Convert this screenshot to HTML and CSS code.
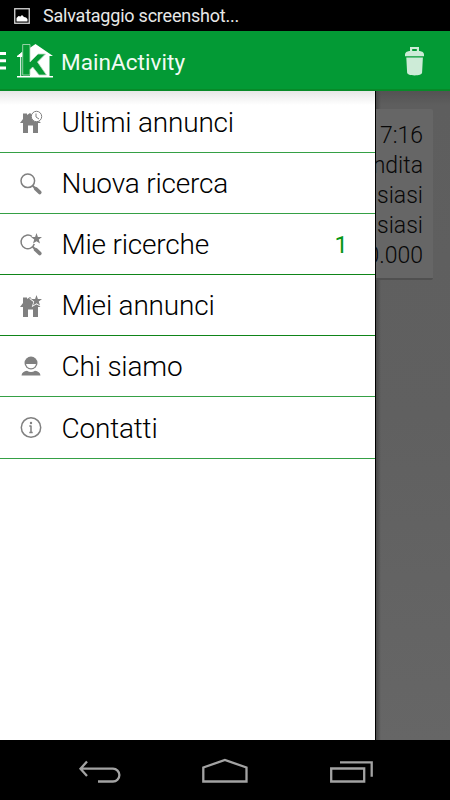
FILE: index.html
```html
<!DOCTYPE html>
<html lang="it">
<head>
<meta charset="utf-8">
<title>MainActivity</title>
<link rel="stylesheet" href="styles.css">
</head>
<body>
<div class="status">
  <svg class="status-icon" width="16" height="16" viewBox="0 0 16 16"><rect x=".75" y=".75" width="14.5" height="14.5" fill="none" stroke="#d8d8d8" stroke-width="1.3"/><path d="M2.500 13.500V10l2-2 2 .5 1.500-1.500 2 2 2 .5 1.500 1.500v2.500z" fill="#fff"/></svg>
  <span class="status-text">Salvataggio screenshot...</span>
</div>
<header class="bar">
  <svg class="brand" width="54" height="36" viewBox="0 0 54 36">
    <path d="M0 10.500h6M0 17.700h6M0 25h6" stroke="#fff" stroke-width="3"/>
    <path d="M30 4.800L35.500 1 53 13h-3.500V34H30z" fill="#fff"/>
    <path d="M17 13.500l5-4v4zM20.700 13v20.500" fill="#fff" stroke="#fff" stroke-width="1"/>
    <path d="M17 33.700h36" stroke="#fff" stroke-width="1.400"/>
    <path d="M22.700 1.500h7.300v17.500l8-8h7.500l-8 8L46.500 32h-7.500L32.700 24l-2.700 2.700V32h-7.300z" fill="#069a35" stroke="#b9dec2" stroke-width=".8"/>
  </svg>
  <h1 class="title">MainActivity</h1>
  <svg class="trash" width="22" height="30" viewBox="0 0 22 30" fill="#cdebd7"><path d="M6 5.500V1h9v4.500h-2.200V3H8.200v2.500z"/><path d="M1 10.200V8.500C1 6 4 5 6 5h9c2 0 5 1 5 3.500v1.700z"/><path d="M2.300 11.500h16.600l-.8 15c-.1 1.900-3.200 2.900-7.500 2.900s-7.400-1-7.500-2.900z"/></svg>
</header>
<main class="screen">
  <nav class="drawer">
    <a class="item"><svg class="icon" viewBox="0 0 24 24"><path class="fill" d="M1 13L4 9V3.500h4V5l3-2 11 10h-3v10h-5v-7.500H9V23H4V13z"/><circle cx="17.500" cy="6.500" r="5.200" fill="#fff" stroke="#808080" stroke-width="1"/><path class="line thin" d="M17 3.500v3.500l3 2"/></svg><span class="label">Ultimi annunci</span></a>
    <a class="item"><svg class="icon" viewBox="0 0 24 24"><circle class="line" cx="8.800" cy="8.800" r="6.800"/><path class="handle" d="M13.700 13.700l3 3"/><path class="grip" d="M16.700 16.700l4 3.700"/></svg><span class="label">Nuova ricerca</span></a>
    <a class="item"><svg class="icon" viewBox="0 0 24 24"><path class="line" d="M13 3.500A6.800 6.800 0 1 0 15.300 11"/><path class="handle" d="M13.700 13.700l3 3"/><path class="grip" d="M16.700 16.700l4 3.700"/><path class="fill" d="M17.500 0l1.400 4 4.100.1-3.200 2.500 1.200 4-3.500-2.300-3.500 2.300 1.200-4L12 4.100l4.100-.1z"/></svg><span class="label">Mie ricerche</span><span class="count">1</span></a>
    <a class="item"><svg class="icon" viewBox="0 0 24 24"><path class="fill" d="M1 13L4 9V3.500h4V5l3-2 11 10h-3v10h-5v-7.500H9V23H4V13z"/><path d="M17.500 1l1.400 4 4.100.1-3.200 2.500 1.200 4-3.500-2.300-3.500 2.300 1.200-4L12 5.100l4.100-.1z" fill="#808080" stroke="#fff" stroke-width="1.500" paint-order="stroke"/></svg><span class="label">Miei annunci</span></a>
    <a class="item"><svg class="icon" viewBox="0 0 24 24"><circle class="fill" cx="12" cy="8" r="6.500"/><path d="M7 9h10c-.6 2.800-2.500 4.300-5 4.300S7.600 11.800 7 9z" fill="#fff"/><path class="fill" d="M2.500 20.500c.3-3 2.500-4.200 5.500-4.700 2.500 1.700 5.500 1.700 8 0 3 .5 5.200 1.700 5.500 4.700z"/></svg><span class="label">Chi siamo</span></a>
    <a class="item"><svg class="icon" viewBox="0 0 24 24"><circle class="line" cx="12" cy="11.500" r="9.700"/><path class="line" d="M12 9.500v7.500M10.300 10h1.700M10.300 16.600h3.400"/><circle class="fill" cx="12" cy="7" r="1.200"/></svg><span class="label">Contatti</span></a>
  </nav>
  <section class="behind">
    <div class="card"><p>7:16</p><p>Vendita</p><p>Qualsiasi</p><p>Qualsiasi</p><p>0.000</p></div>
  </section>
</main>
<footer class="keys">
  <svg width="450" height="60" viewBox="0 0 450 60" fill="none" stroke="#a3a3a3" stroke-width="2.300"><path d="M87 21.500l-6.500 7.200 6.500 7.200M81 28.700h32a6.400 6.400 0 0 1 0 12.800H98"/><path d="M203.300 41.500V27.500l21.600-7.500 21.600 7.500v14z"/><path d="M331.200 28.500h33v13h-33zM340 22.300h31.700v14.500"/></svg>
</footer>
</body>
</html>
```
FILE: styles.css
```css
* { box-sizing: border-box; }
body {
  margin: 0;
  width: 450px;
  height: 800px;
  overflow: hidden;
  display: flex;
  flex-direction: column;
  background: #000;
  font-family: Roboto, "Liberation Sans", sans-serif;
}
.status { height: 31px; display: flex; align-items: center; padding-left: 14px; }
.status-text { margin-left: 13px; color: #e8e8e8; font-size: 18px; line-height: 31px; letter-spacing: -0.220px; white-space: nowrap; }
.bar {
  height: 60px;
  display: flex;
  align-items: center;
  padding-right: 24px;
  background: #039a35;
  border-bottom: 2px solid #078a28;
}
.brand { margin-top: 2px; }
.title { margin: 3px 0 0 7px; color: #f2faf4; font-size: 22.500px; font-weight: 400; letter-spacing: 0.060px; white-space: nowrap; }
.trash { margin: 2px 0 0 auto; }
.screen { height: 649px; display: flex; background: #606060; }
.drawer {
  position: relative;
  z-index: 1;
  width: 376px;
  flex: none;
  background: linear-gradient(#e6e6e6, #fff 14px);
  border-right: 1px solid #000;
}
.item {
  height: 61px;
  display: flex;
  align-items: center;
  padding: 1px 27px 0 19px;
  border-bottom: 1px solid #35a045;
}
.item:first-child, .item:last-child { height: 62px; }
.item:nth-child(3), .item:nth-child(4) { border-bottom-color: #0f8519; }
.icon { width: 24px; height: 24px; flex: none; }
.fill { fill: #808080; }
.line, .handle, .grip { fill: none; stroke: #808080; stroke-width: 1.500; }
.thin { stroke-width: 1; }
.handle { stroke-width: 2; }
.grip { stroke-width: 3.800; stroke-linecap: round; }
.label { margin-left: 18.500px; color: #000; font-size: 28px; font-weight: 300; letter-spacing: -0.200px; white-space: nowrap; }
.count { margin-left: auto; color: #069616; font-size: 24px; }
.behind {
  flex: 1;
  display: flex;
  justify-content: flex-end;
  align-items: flex-start;
  padding: 18px 17px 0 0;
  overflow: hidden;
  background: linear-gradient(90deg, #484848, transparent 5px), linear-gradient(#535353, #5e5e5e 14px, #606060 50%, #666);
}
.card {
  width: 120px;
  height: 171px;
  flex: none;
  padding: 12px 10px 0 0;
  background: #666;
  border-bottom: 2px solid #505050;
  border-radius: 2px;
  text-align: right;
}
.card p { margin: 0; color: #080808; font-size: 23px; line-height: 30px; font-weight: 300; }
.keys { height: 60px; background: #000; }
.keys svg { display: block; }
```
